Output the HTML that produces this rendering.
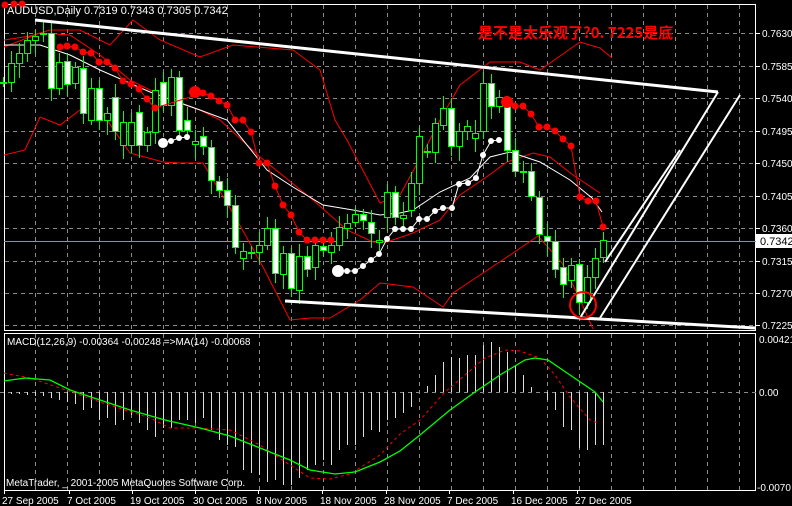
<!DOCTYPE html>
<html><head><meta charset="utf-8"><style>
html,body{margin:0;padding:0;background:#000;overflow:hidden}
svg{display:block}
text{font-family:"Liberation Sans",sans-serif;font-size:10px;fill:#fff}
</style></head><body>
<svg id="s" width="792" height="506" viewBox="0 0 792 506" xmlns="http://www.w3.org/2000/svg">
<rect width="792" height="506" fill="#000"/>
<g id="grid" stroke="#8a8a8a" stroke-dasharray="4,4" stroke-width="1"></g>
<rect x="4.5" y="4.5" width="751" height="326" fill="none" stroke="#fff"/>
<rect x="4.5" y="333.5" width="751" height="157" fill="none" stroke="#fff"/>
<line x1="4" y1="241.5" x2="756" y2="241.5" stroke="#8296a8"/>
<g id="bb" fill="none" stroke="#f00" stroke-width="1">
<polyline points="4,40 30,36 50,30 80,30 110,45 133,20 160,40 200,57 233,45 293,50 320,70 335,120 347,140 380,203 400,195 423,153 440,120 460,85 490,62 520,62 540,70 560,56 580,42 600,48 612,58"/>
<polyline points="4,155 25,150 40,117 60,125 80,110 100,110 130,153 163,162 180,163 203,163 237,220 263,267 290,320 310,318 330,318 360,300 380,283 413,287 443,307 453,293 483,273 510,255 538,236 562,263 577,293 593,329"/>
<polyline points="4,47 40,33 70,35 100,55 130,80 170,100 200,110 220,120 260,157 313,200 347,230 373,242 387,242 413,233 440,220 460,195 485,178 507,162 533,153 550,157 573,175 600,193"/>
</g>
<polyline fill="none" stroke="#fff" points="4,45 40,45 70,55 100,70 150,92 200,110 227,120 267,170 293,187 323,205 353,210 380,215 400,213 413,210 440,192 470,178 490,157 510,152 540,162 570,180 592,198 602,212"/>
<g id="candles"></g>
<g id="sar"></g>
<g stroke="#fff" stroke-width="3" fill="none">
<line x1="35" y1="20" x2="718" y2="92"/>
<line x1="285" y1="301" x2="755" y2="328"/>
</g>
<g stroke="#fff" stroke-width="2" fill="none">
<line x1="718" y1="92" x2="580" y2="318"/>
<line x1="740" y1="95" x2="600" y2="318"/>
<line x1="605" y1="262" x2="680" y2="150"/>
</g>
<circle cx="583" cy="305" r="13" fill="none" stroke="#f00" stroke-width="2"/>
<text x="478" y="38" style="font-family:'WenQuanYi Zen Hei','Noto Sans CJK SC',sans-serif;font-size:15px;font-weight:bold;fill:#f00">是不是太乐观了?0. 7225是底</text>
<text x="7" y="14" style="font-size:11px">AUDUSD,Daily  0.7319 0.7343 0.7305 0.7342</text>
<g id="ax"></g>
<rect x="756" y="234" width="36" height="14" fill="#fff"/>
<text x="760" y="245" style="fill:#000;font-size:11px">0.7342</text>
<line x1="0" y1="392.5" x2="756" y2="392.5" stroke="#8a8a8a" stroke-dasharray="4,4"/>
<g id="hist" stroke="#ddd" stroke-width="1"></g>
<polyline fill="none" stroke="#f00" stroke-dasharray="3,3" points="4,373 30,378 60,388 100,402 150,418 170,428 200,428 230,430 260,445 290,465 310,478 330,479 350,474 380,455 400,434 420,420 445,392 465,375 485,358 505,350 520,351 540,358 555,375 570,397 590,420 598,423"/>
<polyline fill="none" stroke="#0f0" stroke-width="1.3" points="4,381 25,378 50,380 70,390 100,400 130,410 165,420 200,428 230,436 260,448 290,460 310,470 335,474 355,472 380,462 400,451 420,435 450,410 475,392 500,375 525,360 535,358 548,360 570,375 595,392 603,402"/>
<text x="7" y="345" style="font-size:10px">MACD(12,26,9) -0.00364 -0.00248 =>MA(14) -0.00068</text>
<text x="6" y="486" style="font-size:10px">MetaTrader, _ 2001-2005 MetaQuotes Software Corp.</text>
<text x="759" y="343">0.00421</text>
<text x="759" y="396">0.00</text>
<text x="757" y="491">-0.0070</text>
<g id="dates"></g>
</svg>
<script>
var NS="http://www.w3.org/2000/svg";
function el(p,t,a){var e=document.createElementNS(NS,t);for(var k in a)e.setAttribute(k,a[k]);p.appendChild(e);return e;}
var g=document.getElementById('grid');
for(var x=35;x<756;x+=32){el(g,'line',{x1:x+.5,y1:5,x2:x+.5,y2:330});el(g,'line',{x1:x+.5,y1:334,x2:x+.5,y2:490});}
var ys=[33,66,98,131,163,196,228,261,293,325],ps=["0.7630","0.7585","0.7540","0.7495","0.7450","0.7405","0.7360","0.7315","0.7270","0.7225"];
var ax=document.getElementById('ax');
ys.forEach(function(y,i){el(g,'line',{x1:5,y1:y+.5,x2:755,y2:y+.5});el(ax,'line',{x1:756,y1:y+.5,x2:760,y2:y+.5,stroke:'#fff'});var t=el(ax,'text',{x:762,y:y+4});t.textContent=ps[i];});
var C=[[82,82],[82,63],[63,53],[53,40],[40,36],[34,33],[33,88],[88,62],[61,84],[83,67],[68,113],[120,88],[88,120],[120,113],[97,131],[145,122],[145,122],[112,145],[145,132],[132,90],[82,105],[105,77],[77,130],
[120,130],[144,141],[136,146],[147,180],[181,190],[190,205],[205,247],[258,251],[252,253],[252,245],[245,228],[228,273],[274,253],[253,288],[290,256],[256,269],[267,245],[246,250],[252,245],[245,227],[228,223],[222,214],[214,220],[222,233],[242,240],[217,192],[192,217],[218,215],[210,183],
[183,136],[151,152],[152,123],[125,108],[108,146],[146,131],[131,126],[138,133],[131,83],[83,106],[106,97],[101,150],[150,171],[171,172],[171,196],[197,234],[236,241],[241,269],[267,284],[280,265],[264,302],[302,277],[277,258],[257,240]];
var cg=document.getElementById('candles');
C.forEach(function(c,i){var x=3+8*i,o=c[0],cl=c[1],t=Math.min(o,cl),b=Math.max(o,cl);
var hi=t-5-(i*7%9),lo=b+5+(i*5%11);
el(cg,'line',{x1:x+.5,y1:hi,x2:x+.5,y2:lo,stroke:'#0f0'});
var h=Math.max(b-t,1);
el(cg,'rect',{x:x-2.5,y:t+.5,width:6,height:h,fill:cl>o?'#fff':'#000',stroke:'#0f0'});});
var R=[[5,5],[14,4],[22,4],[60,47],[67,46],[75,47],[83,52],[91,53],[99,62],[107,62],[115,68],[123,81],[131,84],[139,89],[147,99],[155,108],[203,93],[211,96],[219,101],[227,105],[235,120],[243,120],[251,132],[259,163],[267,163],[275,186],[283,205],[291,215],[299,232],[307,240],[315,240],[323,240],[331,240],[515,106],[523,106],[531,114],[539,127],[547,127],[555,131],[563,139],[571,146],[580,197],[588,201],[596,201],[603,227]];
var W=[[171,141],[179,138],[187,137],[347,271],[355,271],[363,266],[371,260],[379,254],[387,239],[395,229],[403,229],[411,229],[419,219],[427,219],[435,211],[443,208],[452,208],[459,184],[468,183],[476,178],[483,155],[491,141],[499,140]];
var sg=document.getElementById('sar');
el(sg,'polyline',{points:R.slice(3,33).map(function(p){return p.join(',')}).join(' '),fill:'none',stroke:'#f00'});
el(sg,'polyline',{points:[[507,102]].concat(R.slice(33)).map(function(p){return p.join(',')}).join(' '),fill:'none',stroke:'#f00'});
el(sg,'polyline',{points:[[163,143]].concat(W.slice(0,3)).map(function(p){return p.join(',')}).join(' '),fill:'none',stroke:'#fff'});
el(sg,'polyline',{points:[[338,271]].concat(W.slice(3)).map(function(p){return p.join(',')}).join(' '),fill:'none',stroke:'#fff'});
R.forEach(function(p){el(sg,'circle',{cx:p[0],cy:p[1],r:3.5,fill:'#f00'});});
W.forEach(function(p){el(sg,'circle',{cx:p[0],cy:p[1],r:3,fill:'#fff'});});
el(sg,'circle',{cx:195,cy:92,r:6,fill:'#f00'});el(sg,'circle',{cx:507,cy:102,r:6,fill:'#f00'});
el(sg,'circle',{cx:163,cy:143,r:5,fill:'#fff'});el(sg,'circle',{cx:338,cy:271,r:6,fill:'#fff'});
var hg=document.getElementById('hist');
var H=[392,394,394,395,396,396,398,400,402,404,410,408,420,418,425,420,415,423,430,437,428,428,420,420,423,418,430,440,445,447,470,473,475,482,480,485,485,478,470,465,460,465,450,445,445,437,430,432,420,418,413,407,392,386,375,362,357,358,355,355,345,342,347,352,365,375,387,392,400,410,427,430,448,450,445,445];
for(var i=0;i<76;i++){var x=3+8*i;el(hg,'line',{x1:x+.5,y1:392,x2:x+.5,y2:H[i]});}
var D=[["27 Sep 2005",2],["7 Oct 2005",67],["19 Oct 2005",130],["30 Oct 2005",193],["8 Nov 2005",256],["18 Nov 2005",320],["28 Nov 2005",384],["7 Dec 2005",447],["16 Dec 2005",511],["27 Dec 2005",575]];
var dg=document.getElementById('dates');
D.forEach(function(d){el(dg,'line',{x1:d[1]+2.5,y1:490,x2:d[1]+2.5,y2:494,stroke:'#fff'});var t=el(dg,'text',{x:d[1],y:504});t.textContent=d[0];});
</script>
</body></html>
